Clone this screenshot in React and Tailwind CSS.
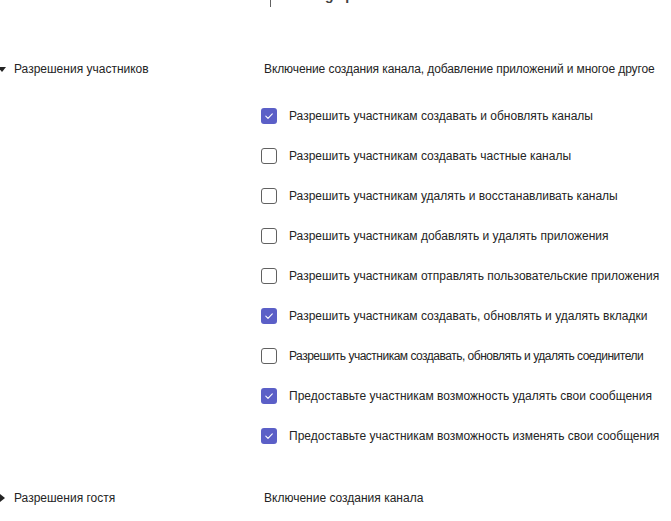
import React from 'react';

const memberPerms = [
  { label: 'Разрешить участникам создавать и обновлять каналы', checked: true },
  { label: 'Разрешить участникам создавать частные каналы', checked: false },
  { label: 'Разрешить участникам удалять и восстанавливать каналы', checked: false },
  { label: 'Разрешить участникам добавлять и удалять приложения', checked: false },
  { label: 'Разрешить участникам отправлять пользовательские приложения', checked: false },
  { label: 'Разрешить участникам создавать, обновлять и удалять вкладки', checked: true },
  { label: 'Разрешить участникам создавать, обновлять и удалять соединители', checked: false, tight: true },
  { label: 'Предоставьте участникам возможность удалять свои сообщения', checked: true },
  { label: 'Предоставьте участникам возможность изменять свои сообщения', checked: true },
];

function Checkbox({ checked }) {
  if (checked) {
    return (
      <span className="w-4 h-4 rounded-[3px] bg-[#5b5fc7] flex items-center justify-center shrink-0">
        <svg width="10" height="10" viewBox="0 0 10 10" fill="none">
          <path d="M1.8 5.2 L4 7.3 L8.3 2.9" stroke="white" strokeWidth="1.1" strokeLinecap="round" strokeLinejoin="round" />
        </svg>
      </span>
    );
  }
  return <span className="w-4 h-4 rounded-[3px] border border-[#616161] bg-white shrink-0" />;
}

function Caret({ open }) {
  return (
    <svg width="8" height="8" viewBox="0 0 8 8" className="-ml-[2px] shrink-0">
      {open ? <path d="M0 2 L8 2 L4 7 Z" fill="#242424" /> : <path d="M2 0 L7 4 L2 8 Z" fill="#242424" />}
    </svg>
  );
}

export default function App() {
  return (
    <div className="w-[671px] h-[521px] bg-white overflow-hidden text-[#242424]" style={{ fontFamily: '"Liberation Sans", Arial, sans-serif' }}>
      {/* cut-off top bar */}
      <div className="h-[7px] overflow-hidden">
        <div className="flex items-end -mt-[13px] pl-[270px]">
          <span className="w-px h-[19px] bg-[#616161]" />
          <span className="ml-[19px] text-[14px] font-bold text-[#424242] leading-[16px] mb-[4px]">Change picture</span>
        </div>
      </div>

      {/* member permissions */}
      <div className="flex mt-[54px]">
        <div className="w-[264px] shrink-0 flex items-center h-4 gap-[8px]">
          <Caret open />
          <span className="text-[12px] leading-4">Разрешения участников</span>
        </div>
        <div className="flex-1">
          <div className="text-[12px] leading-4 h-4 whitespace-nowrap tracking-[-0.1px]">Включение создания канала, добавление приложений и многое другое</div>
          <div className="mt-[19px] -ml-[3px] flex flex-col">
            {memberPerms.map((p) => (
              <div key={p.label} className="h-[40px] flex items-center gap-[12px]">
                <Checkbox checked={p.checked} />
                <span className={p.tight ? 'text-[12px] leading-4 whitespace-nowrap tracking-[-0.5px]' : 'text-[12px] leading-4 whitespace-nowrap'}>{p.label}</span>
              </div>
            ))}
          </div>
        </div>
      </div>

      {/* guest permissions */}
      <div className="flex mt-[34px]">
        <div className="w-[264px] shrink-0 flex items-center h-4 gap-[8px]">
          <Caret open={false} />
          <span className="text-[12px] leading-4">Разрешения гостя</span>
        </div>
        <div className="text-[12px] leading-4 whitespace-nowrap">Включение создания канала</div>
      </div>
    </div>
  );
}
